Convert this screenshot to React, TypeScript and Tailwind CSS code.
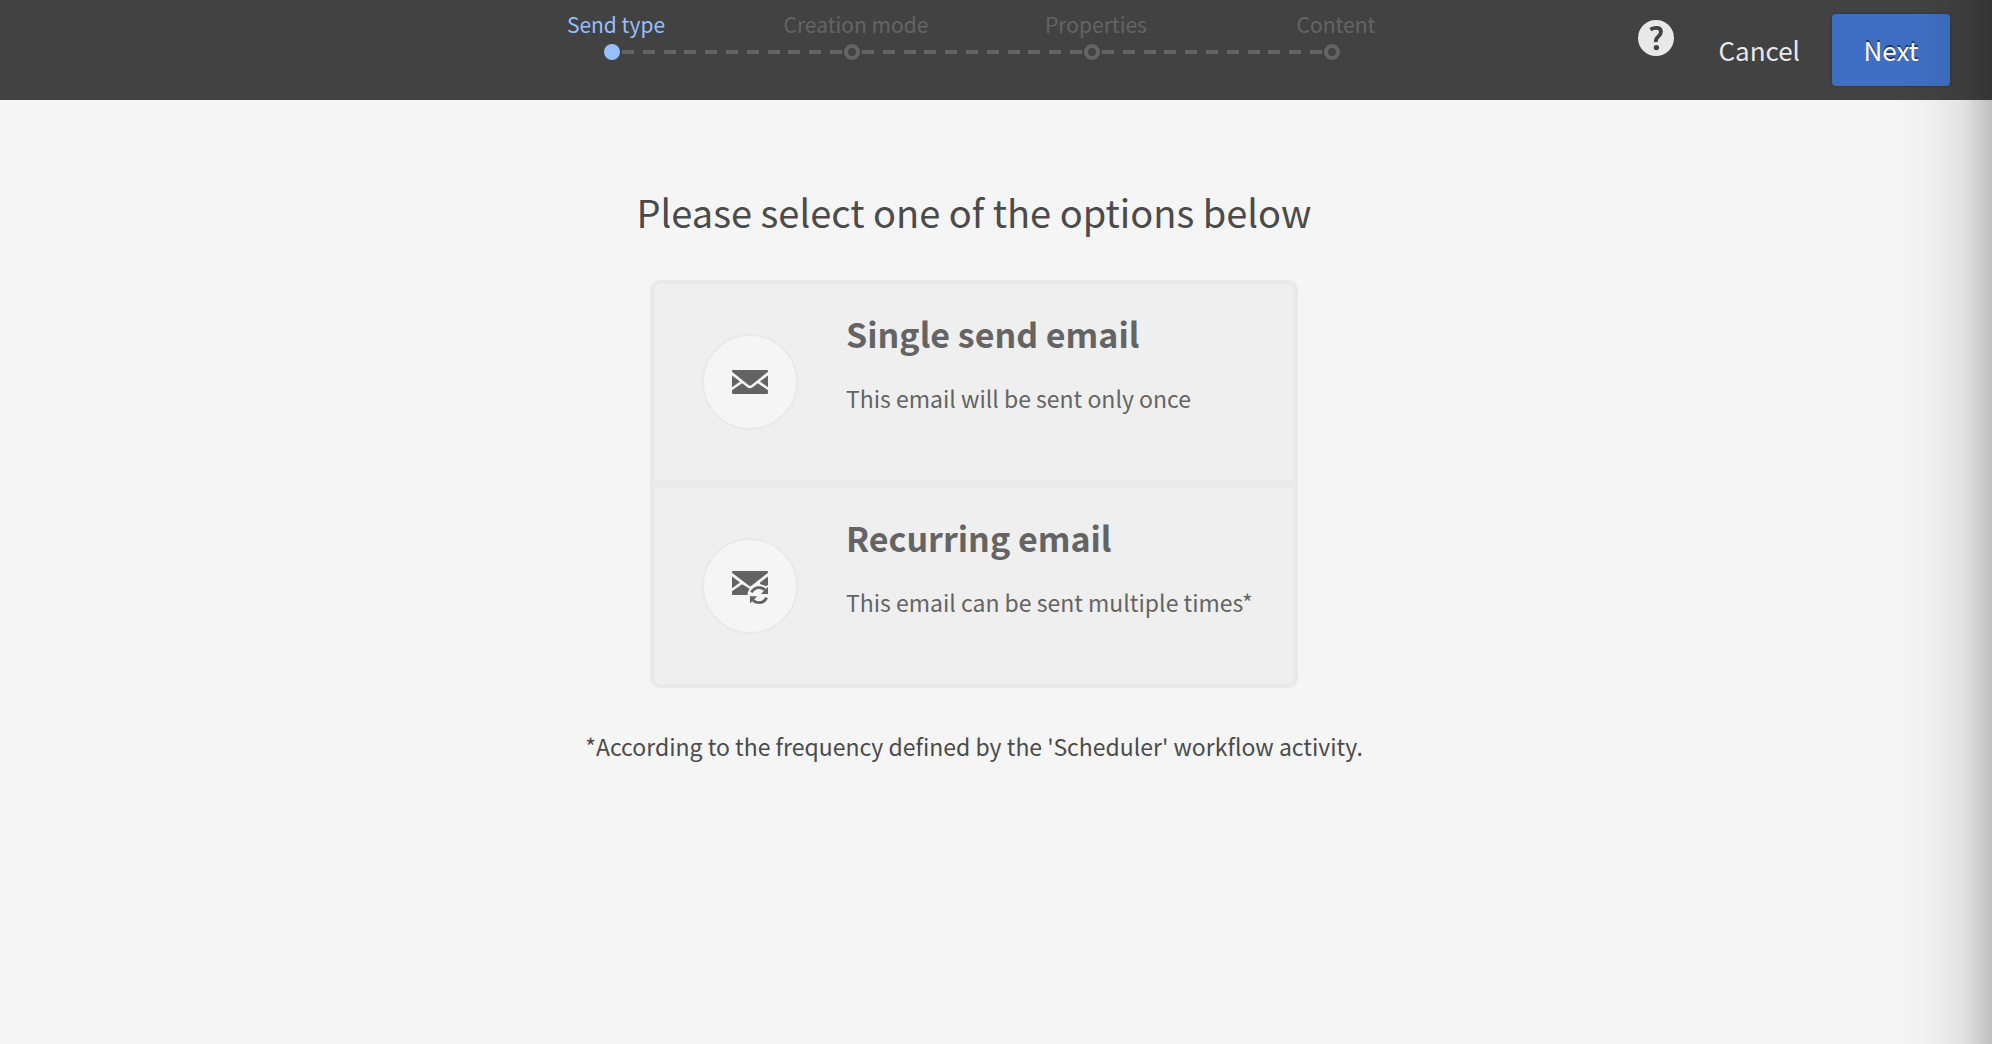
import type { ReactNode } from "react";

const steps = ["Send type", "Creation mode", "Properties", "Content"];
const dashes = Array.from({ length: 11 }, (_, i) => i);

function Envelope() {
  return (
    <svg width="36" height="24" viewBox="0 0 36 24" fill="#636363" aria-hidden="true">
      <path d="M1 0H35Q36 0 36 1V1.8L19.2 15.2Q18 16.1 16.8 15.2L0 1.8V1Q0 0 1 0Z" />
      <path d="M0 5.5L8 11.6L0 17.2Z" />
      <path d="M36 5.5L28 11.6L36 17.2Z" />
      <path d="M0 20.2L10.2 13.2L15.6 17.4Q18 19 20.4 17.4L25.8 13.2L36 20.2V23Q36 24 35 24H1Q0 24 0 23Z" />
    </svg>
  );
}

function RecurringEnvelope() {
  return (
    <svg width="36" height="36" viewBox="0 -3 36 36" fill="#636363" aria-hidden="true">
      <path d="M1 0H35Q36 0 36 1V1.8L20 14.2L18 15.4L0 1.8V1Q0 0 1 0Z" />
      <path d="M0 5.5L8 11.6L0 17.2Z" />
      <path d="M36 5.5V14L33.6 15.2Q31 13.6 28.3 13.2L27.8 11.8Z" />
      <path d="M0 20.2L10.2 13.2L17.6 17.8Q15.8 20.2 15.4 24H1Q0 24 0 23Z" />
      <path d="M19.4 21.4Q22 16.6 27 16.6Q30.6 16.6 33 19" fill="none" stroke="#636363" strokeWidth="2.8" />
      <path d="M36 15.8V23H29L31.4 20.4Z" />
      <path d="M34.6 26.6Q32.4 31.6 27 31.6Q23.6 31.6 21 29.4" fill="none" stroke="#636363" strokeWidth="2.8" />
      <path d="M18 32.6V25.2H25L22.6 28Z" />
    </svg>
  );
}

function Option({ icon, title, text }: { icon: ReactNode; title: string; text: string }) {
  return (
    <button type="button" className="flex min-h-49 w-full gap-12 bg-[#efefef] px-12 text-left text-[#646464]">
      <span className="mt-[50px] flex size-24 shrink-0 items-center justify-center rounded-full border-2 border-[#e9e9e9] bg-[#f5f5f5]">
        {icon}
      </span>
      <span className="flex flex-col gap-5 pt-6">
        <span className="text-[34px] leading-13 font-bold whitespace-nowrap">{title}</span>
        <span className="text-[23px] leading-9 whitespace-nowrap">{text}</span>
      </span>
    </button>
  );
}

export default function App() {
  return (
    <div className="relative min-h-screen bg-[#f5f5f5] font-['Noto_Sans_CJK_SC',sans-serif] text-[#4b4b4b]">
      <header className="grid h-25 grid-cols-[1fr_auto_1fr] bg-[#424242] pr-[42px]">
        <nav aria-label="Progress" className="col-start-2 flex flex-col items-center pt-1.5 pr-0.5">
          <ol className="grid grid-cols-4 pl-1 text-center text-[21px] leading-9">
            {steps.map((step, i) => (
              <li
                key={step}
                aria-current={i === 0 ? "step" : undefined}
                className={i === 0 ? "w-60 text-[#96bffb]" : "w-60 text-[#646464]"}
              >
                {step}
              </li>
            ))}
          </ol>
          <div className="mt-0.5 flex w-[740px] items-center pr-1" aria-hidden="true">
            <span className="size-4 rounded-full bg-[#96bffb]" />
            {steps.slice(1).map((step) => (
              <div key={step} className="flex flex-1 items-center">
                <div className="flex flex-1 justify-between px-0.5">
                  {dashes.map((d) => (
                    <span key={d} className="h-1 w-3 bg-[#646464]" />
                  ))}
                </div>
                <span className="size-4 rounded-full border-4 border-[#646464]" />
              </div>
            ))}
          </div>
        </nav>
        <div className="flex items-start justify-end pt-3.5">
          <button type="button" aria-label="Help" className="mt-1.5 mr-11">
            <svg width="36" height="36" viewBox="0 0 36 36" aria-hidden="true">
              <circle cx="18" cy="18" r="18" fill="#e8e8e8" />
              <path
                d="M12.4 9.6Q15 7.8 18.4 7.8Q23 7.8 23 11.8Q23 14 20.4 16.4Q17.6 18.8 17.8 22.2"
                fill="none"
                stroke="#424242"
                strokeWidth="3.8"
              />
              <circle cx="18.4" cy="27.6" r="2.7" fill="#424242" />
            </svg>
          </button>
          <button type="button" className="mr-8 h-18 pb-0.5 text-[26px] text-[#e8e8e8]">
            Cancel
          </button>
          <button
            type="button"
            className="h-18 w-[118px] rounded-sm bg-[#3f6fc4] pb-0.5 text-[26px] text-white shadow-[0_0_2px_1px_rgba(0,0,0,0.15)] text-shadow-[0_-2px_0_rgba(0,0,0,0.5)]"
          >
            Next
          </button>
        </div>
      </header>

      <main className="flex flex-col items-center pt-20 pr-11">
        <h1 className="text-[38px] leading-16">Please select one of the options below</h1>
        <div className="mt-9 flex w-[648px] flex-col gap-2 overflow-hidden rounded-[10px] border-4 border-[#e9e9e9] bg-[#e9e9e9]">
          <Option icon={<Envelope />} title="Single send email" text="This email will be sent only once" />
          <Option icon={<RecurringEnvelope />} title="Recurring email" text="This email can be sent multiple times*" />
        </div>
        <p className="mt-10 text-[23px] leading-9">
          *According to the frequency defined by the 'Scheduler' workflow activity.
        </p>
      </main>

      <div className="pointer-events-none absolute inset-y-0 right-0 w-24 bg-[linear-gradient(to_right,rgba(0,0,0,0),rgba(0,0,0,0.02)_35%,rgba(0,0,0,0.08)_70%,rgba(0,0,0,0.22))]" />
    </div>
  );
}
